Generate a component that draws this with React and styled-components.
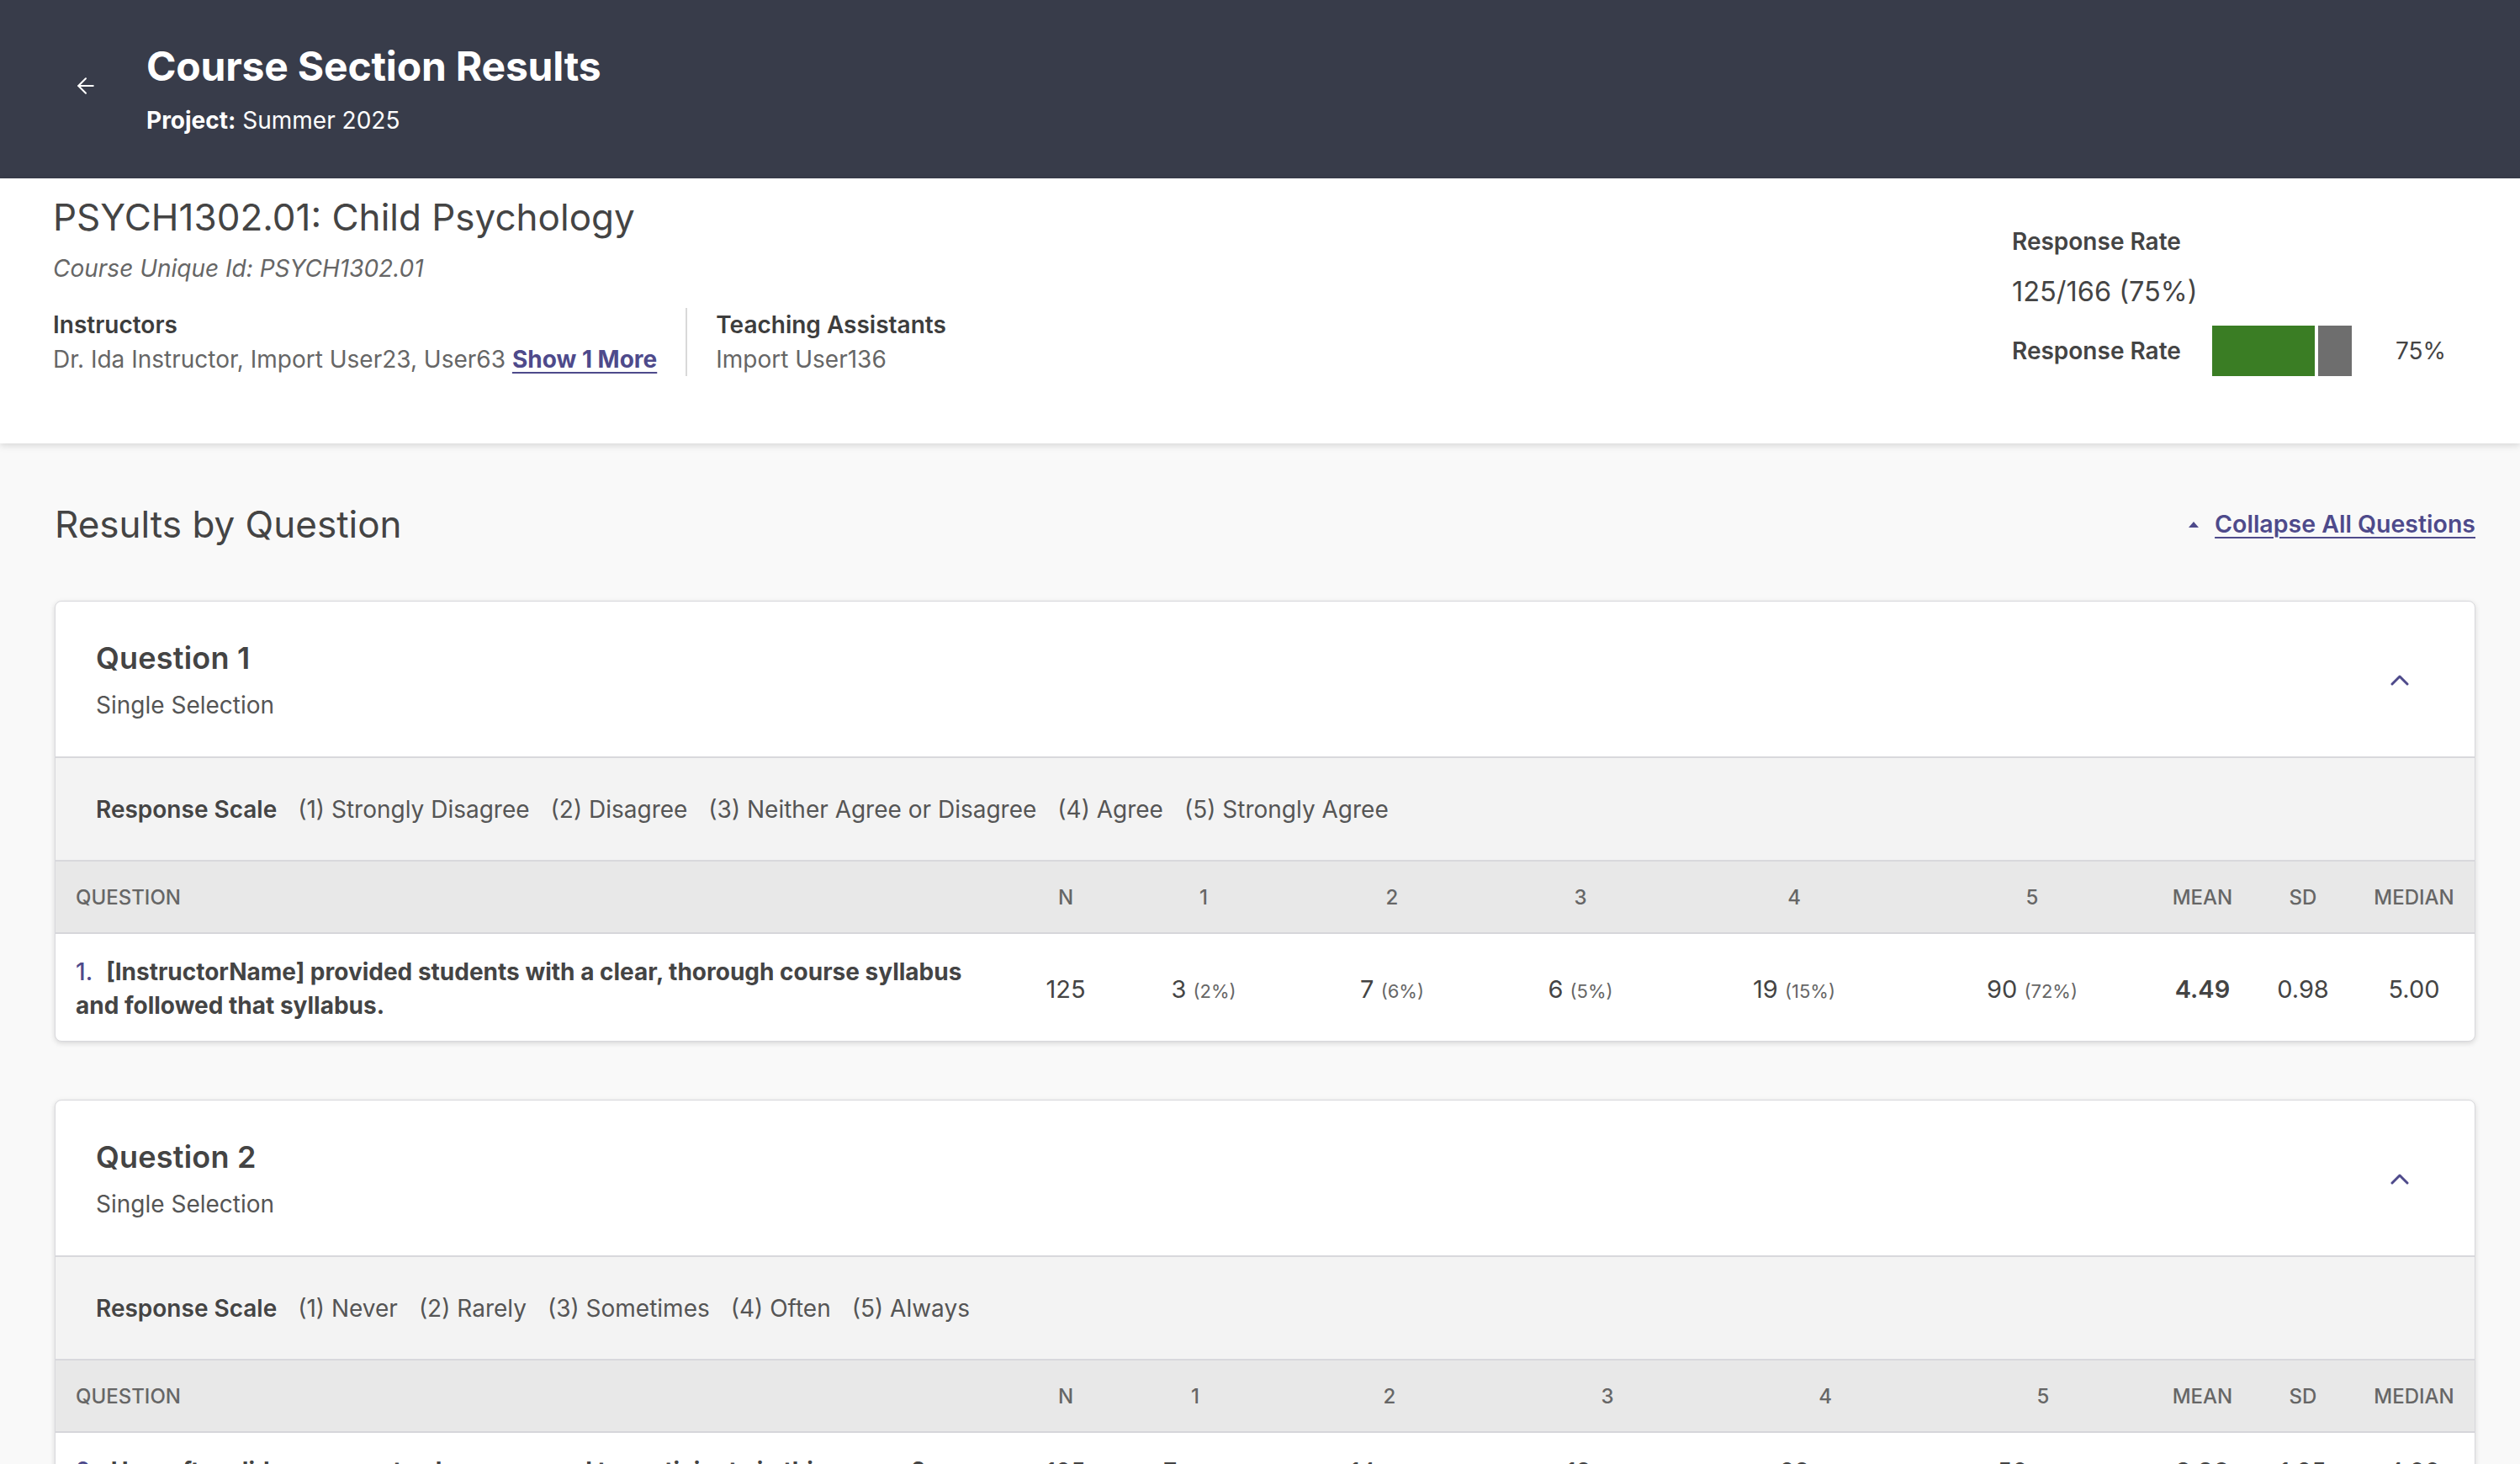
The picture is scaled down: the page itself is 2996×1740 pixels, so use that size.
import React from 'react';
import styled, { createGlobalStyle } from 'styled-components';
import { ArrowLeft } from 'lucide-react';

const GlobalStyle = createGlobalStyle`
  html, body {
    margin: 0;
    padding: 0;
  }
  body {
    font-family: Inter, 'Noto Sans', sans-serif;
    color: #444;
    background: #f9f9f9;
  }
  * {
    box-sizing: border-box;
  }
`;

const PURPLE = '#4e4a8b';

const Page = styled.div`
  height: 1740px;
  overflow: hidden;
  display: flex;
  flex-direction: column;
`;

const TopBar = styled.header`
  flex: 0 0 212px;
  background: #383c4a;
  display: flex;
  align-items: center;
  padding-left: 84px;
  gap: 54px;
  color: #fff;
`;

const BackButton = styled.button`
  width: 36px;
  height: 36px;
  margin-bottom: 8px;
  padding: 0;
  border: 0;
  background: none;
  color: #fff;
  display: flex;
  align-items: center;
  justify-content: center;
  cursor: pointer;
`;

const TitleBlock = styled.div`
  display: flex;
  flex-direction: column;
  margin-bottom: 2px;
`;

const PageTitle = styled.h1`
  margin: 0;
  font-size: 48px;
  line-height: 58px;
  font-weight: 700;
  letter-spacing: -0.2px;
`;

const ProjectLine = styled.div`
  margin-top: 18px;
  font-size: 28px;
  line-height: 34px;

  b {
    font-weight: 700;
  }
`;

const InfoPanel = styled.section`
  position: relative;
  z-index: 1;
  background: #fff;
  display: flex;
  justify-content: space-between;
  align-items: flex-start;
  padding: 20px 88px 80px 63px;
  box-shadow: 0 3px 8px rgba(0, 0, 0, 0.13);
`;

const CourseInfo = styled.div`
  display: flex;
  flex-direction: column;
`;

const CourseTitle = styled.h2`
  margin: 0;
  font-size: 44px;
  line-height: 52px;
  font-weight: 400;
  color: #444;
`;

const CourseId = styled.div`
  margin-top: 18px;
  font-size: 28px;
  line-height: 34px;
  font-style: italic;
  color: #666;
`;

const PeopleRow = styled.div`
  display: flex;
  margin-top: 30px;
`;

const PeopleGroup = styled.div`
  padding: 3px 34px 3px 0;

  & + & {
    padding-left: 34px;
    border-left: 2px solid #d9d9d9;
  }
`;

const GroupLabel = styled.div`
  font-size: 28px;
  line-height: 34px;
  font-weight: 600;
  color: #3d3d3d;
`;

const GroupNames = styled.div`
  margin-top: 7px;
  font-size: 28px;
  line-height: 34px;
  color: #666;
`;

const TextLink = styled.a`
  color: ${PURPLE};
  font-weight: 700;
  text-decoration: underline;
  text-underline-offset: 5px;
  text-decoration-thickness: 2px;
  cursor: pointer;
`;

const RateInfo = styled.div`
  width: 516px;
  margin-top: 38px;
  display: flex;
  flex-direction: column;
`;

const RateLabel = styled.div`
  font-size: 28px;
  line-height: 34px;
  font-weight: 600;
  color: #444;
`;

const RateValue = styled.div`
  margin-top: 23px;
  font-size: 32.5px;
  line-height: 40px;
  color: #444;
`;

const RateRow = styled.div`
  margin-top: 20px;
  display: flex;
  align-items: center;
`;

const RateRowLabel = styled(RateLabel)`
  width: 242px;
`;

const Bar = styled.div`
  width: 168px;
  height: 60px;
  display: flex;
  gap: 4px;
`;

const BarPart = styled.div`
  flex: ${(p) => p.$grow};
  background: ${(p) => p.$color};
`;

const RatePercent = styled.div`
  margin-left: 52px;
  font-size: 28px;
  color: #444;
`;

const Main = styled.main`
  flex: 1;
  padding: 70px 53px 0 65px;
`;

const ResultsHead = styled.div`
  display: flex;
  justify-content: space-between;
  align-items: center;
  margin-bottom: 65px;
`;

const SectionTitle = styled.h2`
  margin: 0;
  font-size: 44px;
  line-height: 52px;
  font-weight: 400;
  color: #444;
`;

const CollapseLink = styled.a`
  display: flex;
  align-items: center;
  gap: 19px;
  color: ${PURPLE};
  font-size: 28.5px;
  line-height: 34px;
  font-weight: 600;
  cursor: pointer;

  span {
    text-decoration: underline;
    text-underline-offset: 5px;
    text-decoration-thickness: 2px;
  }
`;

const Card = styled.article`
  background: #fff;
  border: 1px solid #d8d8dc;
  border-radius: 8px;
  box-shadow: 0 2px 6px rgba(0, 0, 0, 0.14);
  overflow: hidden;
  margin-bottom: 69px;
`;

const CardHead = styled.div`
  display: flex;
  justify-content: space-between;
  align-items: center;
  padding: 45px 78px 44px 48px;
  border-bottom: 2px solid #d8d8dc;
`;

const QuestionTitle = styled.h3`
  margin: 0;
  font-size: 36px;
  line-height: 44px;
  font-weight: 600;
  letter-spacing: 0.2px;
  color: #444;
`;

const QuestionType = styled.div`
  margin-top: 17px;
  font-size: 28px;
  line-height: 34px;
  color: #555;
`;

const ScaleBar = styled.div`
  height: 123px;
  display: flex;
  align-items: center;
  gap: 25px;
  padding: 0 48px;
  background: #f3f3f3;
  border-bottom: 2px solid #d8d8dc;
  font-size: 28px;
  color: #555;

  b {
    font-weight: 600;
    color: #444;
  }
`;

const Grid = styled.div`
  display: grid;
  grid-template-columns: ${(p) => p.$cols};
  align-items: center;
`;

const HeadRow = styled(Grid)`
  height: 86px;
  background: #e8e8e8;
  border-bottom: 2px solid #d6d6da;
`;

const HeadCell = styled.div`
  font-size: 24px;
  font-weight: 500;
  color: #666;
  text-transform: uppercase;
  text-align: ${(p) => (p.$left ? 'left' : 'center')};
  padding-left: ${(p) => (p.$left ? '24px' : '0')};
`;

const DataRow = styled(Grid)`
  padding: 25px 0 22px;
`;

const QuestionText = styled.div`
  padding: 0 44px 0 24px;
  font-size: 28px;
  line-height: 40px;
  font-weight: 700;
  color: #444;
`;

const QuestionNum = styled.span`
  display: inline-block;
  color: ${PURPLE};
  font-weight: 500;
  margin-right: 16px;
`;

const ValueCell = styled.div`
  text-align: center;
  font-size: 29px;
  font-weight: ${(p) => (p.$bold ? 600 : 400)};
  color: #444;

  small {
    font-size: 22px;
    color: #666;
  }
`;

const ChevronUp = () => (
  <svg width="22" height="14" viewBox="0 0 22 14" fill="none">
    <polyline
      points="2,12 11,3 20,12"
      stroke={PURPLE}
      strokeWidth="3"
      strokeLinecap="round"
      strokeLinejoin="round"
    />
  </svg>
);

const Caret = () => (
  <svg width="12" height="7" viewBox="0 0 12 7">
    <polygon points="0,7 6,0 12,7" fill={PURPLE} />
  </svg>
);

const questions = [
  {
    id: 1,
    scale: ['Strongly Disagree', 'Disagree', 'Neither Agree or Disagree', 'Agree', 'Strongly Agree'],
    cols: '1152px 98px 230px 218px 230px 278px 288px 117px 122px 142px',
    text: '[InstructorName] provided students with a clear, thorough course syllabus and followed that syllabus.',
    n: 125,
    counts: [
      [3, '2%'],
      [7, '6%'],
      [6, '5%'],
      [19, '15%'],
      [90, '72%'],
    ],
    mean: '4.49',
    sd: '0.98',
    median: '5.00',
  },
  {
    id: 2,
    scale: ['Never', 'Rarely', 'Sometimes', 'Often', 'Always'],
    cols: '1150px 102px 206px 256px 262px 256px 262px 117px 122px 142px',
    text: 'How often did you come to class prepared to participate in this course?',
    n: 125,
    counts: [
      [7, '6%'],
      [14, '11%'],
      [19, '15%'],
      [29, '23%'],
      [56, '45%'],
    ],
    mean: '3.90',
    sd: '1.25',
    median: '4.00',
  },
];

const headers = ['Question', 'N', '1', '2', '3', '4', '5', 'Mean', 'SD', 'Median'];

function QuestionCard({ q }) {
  return (
    <Card>
      <CardHead>
        <div>
          <QuestionTitle>Question {q.id}</QuestionTitle>
          <QuestionType>Single Selection</QuestionType>
        </div>
        <ChevronUp />
      </CardHead>
      <ScaleBar>
        <b>Response Scale</b>
        {q.scale.map((s, i) => (
          <span key={s}>
            ({i + 1}) {s}
          </span>
        ))}
      </ScaleBar>
      <HeadRow $cols={q.cols}>
        {headers.map((h, i) => (
          <HeadCell key={h} $left={i === 0}>
            {h}
          </HeadCell>
        ))}
      </HeadRow>
      <DataRow $cols={q.cols}>
        <QuestionText>
          <QuestionNum>{q.id}.</QuestionNum>
          {q.text}
        </QuestionText>
        <ValueCell>{q.n}</ValueCell>
        {q.counts.map(([count, pct], i) => (
          <ValueCell key={i}>
            {count} <small>({pct})</small>
          </ValueCell>
        ))}
        <ValueCell $bold>{q.mean}</ValueCell>
        <ValueCell>{q.sd}</ValueCell>
        <ValueCell>{q.median}</ValueCell>
      </DataRow>
    </Card>
  );
}

export default function App() {
  return (
    <Page>
      <GlobalStyle />
      <TopBar>
        <BackButton aria-label="Back">
          <ArrowLeft size={30} strokeWidth={1.6} />
        </BackButton>
        <TitleBlock>
          <PageTitle>Course Section Results</PageTitle>
          <ProjectLine>
            <b>Project:</b> Summer 2025
          </ProjectLine>
        </TitleBlock>
      </TopBar>

      <InfoPanel>
        <CourseInfo>
          <CourseTitle>PSYCH1302.01: Child Psychology</CourseTitle>
          <CourseId>Course Unique Id: PSYCH1302.01</CourseId>
          <PeopleRow>
            <PeopleGroup>
              <GroupLabel>Instructors</GroupLabel>
              <GroupNames>
                Dr. Ida Instructor, Import User23, User63 <TextLink>Show 1 More</TextLink>
              </GroupNames>
            </PeopleGroup>
            <PeopleGroup>
              <GroupLabel>Teaching Assistants</GroupLabel>
              <GroupNames>Import User136</GroupNames>
            </PeopleGroup>
          </PeopleRow>
        </CourseInfo>
        <RateInfo>
          <RateLabel>Response Rate</RateLabel>
          <RateValue>125/166 (75%)</RateValue>
          <RateRow>
            <RateRowLabel>Response Rate</RateRowLabel>
            <Bar>
              <BarPart $grow={75} $color="#3a7d24" />
              <BarPart $grow={25} $color="#6e6e6e" />
            </Bar>
            <RatePercent>75%</RatePercent>
          </RateRow>
        </RateInfo>
      </InfoPanel>

      <Main>
        <ResultsHead>
          <SectionTitle>Results by Question</SectionTitle>
          <CollapseLink>
            <Caret />
            <span>Collapse All Questions</span>
          </CollapseLink>
        </ResultsHead>
        {questions.map((q) => (
          <QuestionCard key={q.id} q={q} />
        ))}
      </Main>
    </Page>
  );
}
